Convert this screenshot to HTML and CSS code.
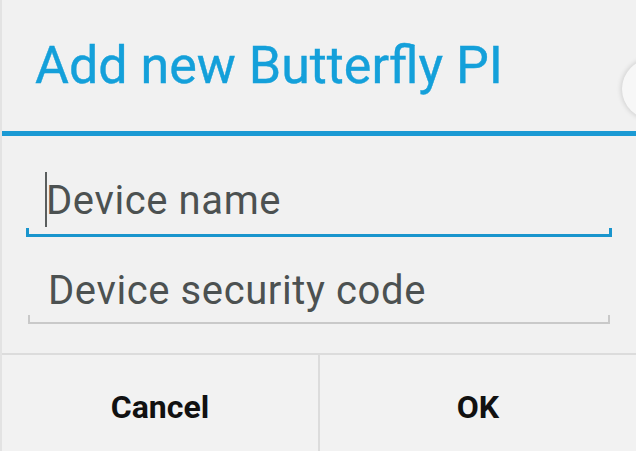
FILE: index.html
```html
<!DOCTYPE html>
<html lang="en">
<head>
    <meta charset="UTF-8">
    <meta name="viewport" content="width=device-width, initial-scale=1.0">
    <title>Add new Butterfly PI</title>
    <link rel="stylesheet" href="styles.css">
</head>
<body>
    <div class="dialog">
        <div class="dialog-header">
            <h1>Add new Butterfly PI</h1>
        </div>
        <div class="header-rule"></div>

        <div class="dialog-body">
            <div class="field active">
                <span class="field-text"><span class="cursor"></span>Device name</span>
                <div class="field-line"></div>
            </div>
            <div class="field">
                <span class="field-text">Device security code</span>
                <div class="field-line"></div>
            </div>
        </div>

        <div class="button-bar">
            <button class="dialog-button">Cancel</button>
            <button class="dialog-button">OK</button>
        </div>

        <div class="corner-knob"></div>
    </div>
</body>
</html>
```

FILE: styles.css
```css
* {
    margin: 0;
    padding: 0;
    box-sizing: border-box;
}

body {
    font-family: Roboto, "Noto Sans", Arial, sans-serif;
    background-color: #f1f1f1;
}

.dialog {
    width: 636px;
    height: 451px;
    position: relative;
    overflow: hidden;
    background: #f1f1f1;
    border-left: 2px solid #e3e3e3;
    display: flex;
    flex-direction: column;
}

.dialog-header {
    height: 131px;
    padding: 40px 0 0 33px;
}

.dialog-header h1 {
    font-size: 52px;
    line-height: 1;
    font-weight: 400;
    color: #14a0da;
    -webkit-text-stroke: 0.4px #14a0da;
}

.header-rule {
    height: 5px;
    background: #1b9ad4;
}

.dialog-body {
    padding: 0 24px 0 24px;
}

.field {
    display: flex;
    flex-direction: column;
}

.field-text {
    position: relative;
    font-size: 40px;
    line-height: 1;
    letter-spacing: 0.6px;
    color: #4c5151;
    padding-left: 20px;
}

.field.active {
    padding-top: 45px;
}

.field + .field {
    padding-top: 34px;
    padding-left: 2px;
    padding-right: 2px;
}

.cursor {
    position: absolute;
    left: 19px;
    top: -9px;
    width: 2px;
    height: 55px;
    background: #5a5e5e;
}

.field-line {
    margin-top: 7px;
    height: 9px;
    border: 3px solid #1a95cd;
    border-top: none;
}

.field + .field .field-line {
    margin-top: 4px;
    height: 9px;
    border-width: 2px;
    border-color: #c9c9c9;
}

.button-bar {
    margin-top: 29px;
    flex: 1;
    display: flex;
    border-top: 2px solid #dcdcdc;
}

.dialog-button {
    flex: 1;
    border: none;
    background: #f2f2f2;
    font-family: Roboto, Arial, sans-serif;
    font-size: 32px;
    font-weight: 700;
    line-height: 1;
    color: #111;
    padding-top: 36px;
    display: flex;
    justify-content: center;
    align-items: flex-start;
}

.dialog-button + .dialog-button {
    border-left: 2px solid #dcdcdc;
}

.corner-knob {
    position: absolute;
    left: 620px;
    top: 59px;
    width: 60px;
    height: 60px;
    border-radius: 50%;
    background: #f7f7f7;
    box-shadow: 0 0 5px 1px rgba(0, 0, 0, 0.14);
}
```
